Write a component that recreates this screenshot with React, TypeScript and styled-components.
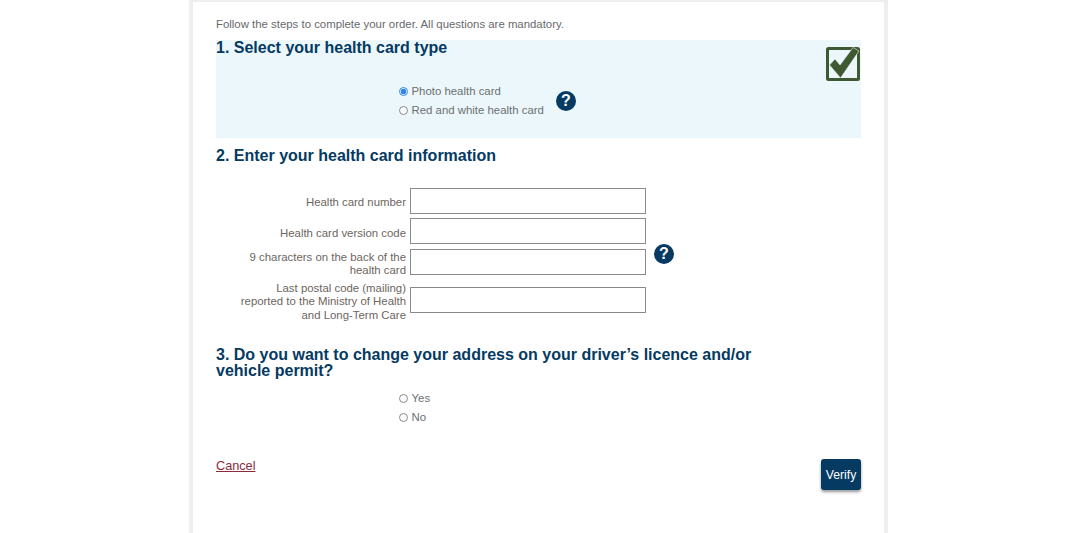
import React from "react";
import styled, { createGlobalStyle } from "styled-components";

const Global = createGlobalStyle`
  html, body { margin: 0; padding: 0; background: #fff; height: 533px; overflow: hidden; }
  body { font-family: "Liberation Sans", Arial, sans-serif; }
`;

const Page = styled.div`
  width: 699px;
  height: 531px;
  margin: 0 0 0 189px;
  padding: 2px 0 0;
  background: #eeeeee;
  display: flex;
  justify-content: center;
`;

const Panel = styled.main`
  width: 691px;
  background: #fff;
  box-sizing: border-box;
  padding: 15px 23px 0 23px;
  display: flex;
  flex-direction: column;
`;

const Intro = styled.p`
  margin: 0 0 9px;
  font-size: 11.4px;
  line-height: 14px;
  color: #666a6e;
`;

const Heading = styled.h2`
  margin: 0;
  font-size: 16px;
  line-height: 16px;
  font-weight: 700;
  color: #053a62;
  max-width: 560px;
`;

const FirstSection = styled.section`
  position: relative;
  height: 98px;
  background: #ebf7fa;
  box-sizing: border-box;
`;

const CheckIcon = styled.svg`
  position: absolute;
  right: 0;
  top: 6px;
`;

const RadioGroup = styled.div<{ $top: number }>`
  display: flex;
  flex-direction: column;
  gap: 5px;
  margin: ${(p) => p.$top}px 0 0 183px;
  width: fit-content;
  position: relative;
`;

const RadioRow = styled.label`
  display: flex;
  align-items: center;
  gap: 3.5px;
  height: 14px;
  font-size: 11.4px;
  color: #6b6f72;
`;

const Radio = styled.input`
  appearance: auto;
  width: 9px;
  height: 9px;
  margin: 0;
  accent-color: #0a6fe8;
  opacity: 0.85;
`;

const Help = styled.span`
  display: inline-flex;
  align-items: center;
  justify-content: center;
  width: 20px;
  height: 20px;
  border-radius: 50%;
  background: #053a62;
  color: #fff;
  font-size: 16px;
  font-weight: 700;
  line-height: 20px;
`;

const RadioHelp = styled(Help)`
  position: absolute;
  left: 157px;
  top: 7px;
`;

const SecondHeading = styled(Heading)`
  margin-top: 10px;
`;

const Fields = styled.div`
  margin-top: 24px;
  display: grid;
  grid-template-columns: 190px 236px 20px;
  column-gap: 4px;
  row-gap: 4.25px;
  align-items: center;
`;

const FieldLabel = styled.label`
  text-align: right;
  font-size: 11.4px;
  line-height: 13.5px;
  color: #6d655e;
  margin: 2px 0 -2px;
`;

const FieldInput = styled.input`
  box-sizing: border-box;
  width: 236px;
  height: 26px;
  border: 1px solid #8a8a8a;
  background: #fff;
  padding: 0 4px;
`;

const FieldHelp = styled(Help)`
  margin: -5px 0 0 4px;
  align-self: start;
`;

const ThirdHeading = styled(Heading)`
  margin-top: 26.5px;
`;

const Actions = styled.div`
  margin-top: 35px;
  display: flex;
  justify-content: space-between;
  align-items: flex-start;
`;

const CancelLink = styled.a`
  font-size: 12.7px;
  line-height: 14px;
  color: #8a2a3a;
  text-decoration: underline;
`;

const VerifyButton = styled.button`
  width: 40px;
  height: 31px;
  padding: 0;
  border: 0;
  border-radius: 3px;
  background: #053a62;
  color: #fff;
  font-family: inherit;
  font-size: 12.2px;
  box-shadow: 0 2px 3px rgba(0, 0, 0, 0.4);
`;

const Check = () => (
  <CheckIcon width="36" height="36" viewBox="0 0 36 36" aria-hidden>
    <rect x="2.5" y="2.5" width="31" height="31" rx="1" fill="none" stroke="#3f5a32" strokeWidth="3" />
    <path d="M4.5 19L10 13 15 19 28 1.5 34 5 15.5 32z" fill="#3f5a32" stroke="#ebf7fa" strokeWidth="0.6" />
  </CheckIcon>
);

export default function App() {
  return (
    <>
      <Global />
      <Page>
        <Panel>
          <Intro>Follow the steps to complete your order. All questions are mandatory.</Intro>
          <FirstSection>
            <Heading>1. Select your health card type</Heading>
            <Check />
            <RadioGroup $top={28}>
              <RadioRow>
                <Radio type="radio" name="card" defaultChecked />
                Photo health card
              </RadioRow>
              <RadioRow>
                <Radio type="radio" name="card" />
                Red and white health card
              </RadioRow>
              <RadioHelp>?</RadioHelp>
            </RadioGroup>
          </FirstSection>
          <SecondHeading>2. Enter your health card information</SecondHeading>
          <Fields>
            <FieldLabel>Health card number</FieldLabel>
            <FieldInput />
            <span />
            <FieldLabel>Health card version code</FieldLabel>
            <FieldInput />
            <span />
            <FieldLabel>
              9 characters on the back of the
              <br />
              health card
            </FieldLabel>
            <FieldInput />
            <FieldHelp>?</FieldHelp>
            <FieldLabel>
              Last postal code (mailing)
              <br />
              reported to the Ministry of Health
              <br />
              and Long-Term Care
            </FieldLabel>
            <FieldInput />
            <span />
          </Fields>
          <ThirdHeading>3. Do you want to change your address on your driver’s licence and/or vehicle permit?</ThirdHeading>
          <RadioGroup $top={12.5}>
            <RadioRow>
              <Radio type="radio" name="addr" />
              Yes
            </RadioRow>
            <RadioRow>
              <Radio type="radio" name="addr" />
              No
            </RadioRow>
          </RadioGroup>
          <Actions>
            <CancelLink href="#">Cancel</CancelLink>
            <VerifyButton>Verify</VerifyButton>
          </Actions>
        </Panel>
      </Page>
    </>
  );
}
